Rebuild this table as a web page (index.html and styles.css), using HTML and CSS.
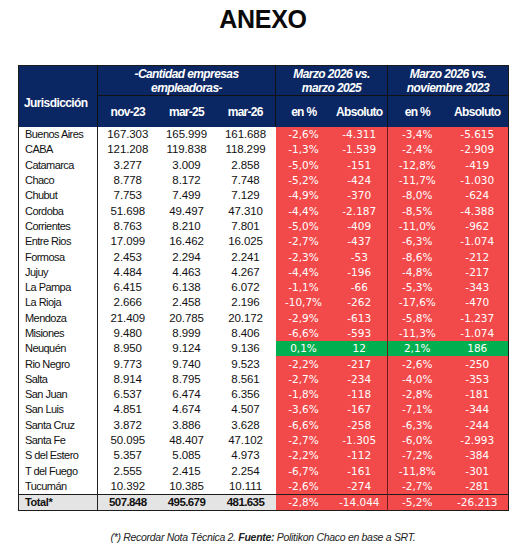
FILE: index.html
```html
<!DOCTYPE html>
<html lang="es">
<head>
<meta charset="utf-8">
<title>Anexo</title>
<link rel="stylesheet" href="styles.css">
</head>
<body>
<h1 class="title">ANEXO</h1>
<table class="grid">
  <colgroup>
    <col class="w-jur"><col class="w-n1"><col class="w-n2"><col class="w-n3">
    <col class="w-p1"><col class="w-a1"><col class="w-p2"><col class="w-a2">
  </colgroup>
  <thead>
    <tr class="h1">
      <th rowspan="2" class="hjur">Jurisdicción</th>
      <th colspan="3" class="grp">-Cantidad empresas<br>empleadoras-</th>
      <th colspan="2" class="grp">Marzo 2026 vs.<br>marzo 2025</th>
      <th colspan="2" class="grp last">Marzo 2026 vs.<br>noviembre 2023</th>
    </tr>
    <tr class="h2">
      <th>nov-23</th><th>mar-25</th><th class="sep">mar-26</th>
      <th>en %</th><th class="sep">Absoluto</th>
      <th>en %</th><th>Absoluto</th>
    </tr>
  </thead>
  <tbody>
    <tr><td class="jur">Buenos Aires</td><td class="n">167.303</td><td class="n">165.999</td><td class="n">161.688</td><td class="r">-2,6%</td><td class="r div">-4.311</td><td class="r">-3,4%</td><td class="r">-5.615</td></tr>
    <tr><td class="jur">CABA</td><td class="n">121.208</td><td class="n">119.838</td><td class="n">118.299</td><td class="r">-1,3%</td><td class="r div">-1.539</td><td class="r">-2,4%</td><td class="r">-2.909</td></tr>
    <tr><td class="jur">Catamarca</td><td class="n">3.277</td><td class="n">3.009</td><td class="n">2.858</td><td class="r">-5,0%</td><td class="r div">-151</td><td class="r">-12,8%</td><td class="r">-419</td></tr>
    <tr><td class="jur">Chaco</td><td class="n">8.778</td><td class="n">8.172</td><td class="n">7.748</td><td class="r">-5,2%</td><td class="r div">-424</td><td class="r">-11,7%</td><td class="r">-1.030</td></tr>
    <tr><td class="jur">Chubut</td><td class="n">7.753</td><td class="n">7.499</td><td class="n">7.129</td><td class="r">-4,9%</td><td class="r div">-370</td><td class="r">-8,0%</td><td class="r">-624</td></tr>
    <tr><td class="jur">Cordoba</td><td class="n">51.698</td><td class="n">49.497</td><td class="n">47.310</td><td class="r">-4,4%</td><td class="r div">-2.187</td><td class="r">-8,5%</td><td class="r">-4.388</td></tr>
    <tr><td class="jur">Corrientes</td><td class="n">8.763</td><td class="n">8.210</td><td class="n">7.801</td><td class="r">-5,0%</td><td class="r div">-409</td><td class="r">-11,0%</td><td class="r">-962</td></tr>
    <tr><td class="jur">Entre Rios</td><td class="n">17.099</td><td class="n">16.462</td><td class="n">16.025</td><td class="r">-2,7%</td><td class="r div">-437</td><td class="r">-6,3%</td><td class="r">-1.074</td></tr>
    <tr><td class="jur">Formosa</td><td class="n">2.453</td><td class="n">2.294</td><td class="n">2.241</td><td class="r">-2,3%</td><td class="r div">-53</td><td class="r">-8,6%</td><td class="r">-212</td></tr>
    <tr><td class="jur">Jujuy</td><td class="n">4.484</td><td class="n">4.463</td><td class="n">4.267</td><td class="r">-4,4%</td><td class="r div">-196</td><td class="r">-4,8%</td><td class="r">-217</td></tr>
    <tr><td class="jur">La Pampa</td><td class="n">6.415</td><td class="n">6.138</td><td class="n">6.072</td><td class="r">-1,1%</td><td class="r div">-66</td><td class="r">-5,3%</td><td class="r">-343</td></tr>
    <tr><td class="jur">La Rioja</td><td class="n">2.666</td><td class="n">2.458</td><td class="n">2.196</td><td class="r">-10,7%</td><td class="r div">-262</td><td class="r">-17,6%</td><td class="r">-470</td></tr>
    <tr><td class="jur">Mendoza</td><td class="n">21.409</td><td class="n">20.785</td><td class="n">20.172</td><td class="r">-2,9%</td><td class="r div">-613</td><td class="r">-5,8%</td><td class="r">-1.237</td></tr>
    <tr><td class="jur">Misiones</td><td class="n">9.480</td><td class="n">8.999</td><td class="n">8.406</td><td class="r">-6,6%</td><td class="r div">-593</td><td class="r">-11,3%</td><td class="r">-1.074</td></tr>
    <tr><td class="jur">Neuquén</td><td class="n">8.950</td><td class="n">9.124</td><td class="n">9.136</td><td class="g">0,1%</td><td class="g div">12</td><td class="g">2,1%</td><td class="g">186</td></tr>
    <tr><td class="jur">Rio Negro</td><td class="n">9.773</td><td class="n">9.740</td><td class="n">9.523</td><td class="r">-2,2%</td><td class="r div">-217</td><td class="r">-2,6%</td><td class="r">-250</td></tr>
    <tr><td class="jur">Salta</td><td class="n">8.914</td><td class="n">8.795</td><td class="n">8.561</td><td class="r">-2,7%</td><td class="r div">-234</td><td class="r">-4,0%</td><td class="r">-353</td></tr>
    <tr><td class="jur">San Juan</td><td class="n">6.537</td><td class="n">6.474</td><td class="n">6.356</td><td class="r">-1,8%</td><td class="r div">-118</td><td class="r">-2,8%</td><td class="r">-181</td></tr>
    <tr><td class="jur">San Luis</td><td class="n">4.851</td><td class="n">4.674</td><td class="n">4.507</td><td class="r">-3,6%</td><td class="r div">-167</td><td class="r">-7,1%</td><td class="r">-344</td></tr>
    <tr><td class="jur">Santa Cruz</td><td class="n">3.872</td><td class="n">3.886</td><td class="n">3.628</td><td class="r">-6,6%</td><td class="r div">-258</td><td class="r">-6,3%</td><td class="r">-244</td></tr>
    <tr><td class="jur">Santa Fe</td><td class="n">50.095</td><td class="n">48.407</td><td class="n">47.102</td><td class="r">-2,7%</td><td class="r div">-1.305</td><td class="r">-6,0%</td><td class="r">-2.993</td></tr>
    <tr><td class="jur">S del Estero</td><td class="n">5.357</td><td class="n">5.085</td><td class="n">4.973</td><td class="r">-2,2%</td><td class="r div">-112</td><td class="r">-7,2%</td><td class="r">-384</td></tr>
    <tr><td class="jur">T del Fuego</td><td class="n">2.555</td><td class="n">2.415</td><td class="n">2.254</td><td class="r">-6,7%</td><td class="r div">-161</td><td class="r">-11,8%</td><td class="r">-301</td></tr>
    <tr><td class="jur">Tucumán</td><td class="n">10.392</td><td class="n">10.385</td><td class="n">10.111</td><td class="r">-2,6%</td><td class="r div">-274</td><td class="r">-2,7%</td><td class="r">-281</td></tr>
  </tbody>
  <tfoot>
    <tr class="total"><td class="jur">Total*</td><td class="n">507.848</td><td class="n">495.679</td><td class="n">481.635</td><td class="r">-2,8%</td><td class="r div">-14.044</td><td class="r">-5,2%</td><td class="r">-26.213</td></tr>
  </tfoot>
</table>
<p class="note">(*) Recordar Nota Técnica 2. <b>Fuente:</b> Politikon Chaco en base a SRT.</p>
</body>
</html>
```

FILE: styles.css
```css
html, body {
  margin: 0;
  padding: 0;
  background: #ffffff;
}
body {
  width: 526px;
  font-family: "Liberation Sans", Arial, sans-serif;
  color: #111;
}
.title {
  margin: 4px 0 0;
  height: 30px;
  line-height: 30px;
  font-size: 25px;
  font-weight: 700;
  text-align: center;
  color: #0a0a0a;
  letter-spacing: -0.3px;
  font-family: "Liberation Sans", Arial, sans-serif;
}
.grid {
  margin: 31px 0 0 18px;
  width: 490px;
  border-collapse: collapse;
  table-layout: fixed;
  border: 1.5px solid #1c1c1c;
}
.w-jur { width: 79px; }
.w-n1 { width: 60px; }
.w-n2 { width: 58px; }
.w-n3 { width: 60px; }
.w-p1 { width: 56px; }
.w-a1 { width: 56px; }
.w-p2 { width: 59px; }
.w-a2 { width: 62px; }

th {
  background: #0b2763;
  color: #fff;
  font-family: "Liberation Sans", Arial, sans-serif;
  font-weight: 700;
  font-size: 12px;
  letter-spacing: -0.6px;
  padding: 0;
  text-align: center;
}
.h1 th { height: 29px; }
.h2 th { height: 31px; letter-spacing: -0.7px; }
.grp {
  font-style: italic;
  line-height: 14px;
  border-bottom: 1px solid #111;
  border-right: 1px solid #111;
}
.grp.last { border-right: none; }
.hjur {
  text-align: left;
  padding: 12px 0 0 5px;
  border-right: 1px solid #111;
}
.h2 th.sep { border-right: 1px solid #111; }

td {
  height: 15.3px;
  padding: 0;
  line-height: 15px;
  white-space: nowrap;
}
td.jur {
  padding-left: 6px;
  font-family: "Liberation Sans", Arial, sans-serif;
  font-size: 11px;
  letter-spacing: -0.55px;
  border-right: 1px solid #222;
}
td.n {
  text-align: center;
  font-family: "Liberation Sans", Arial, sans-serif;
  font-size: 11.5px;
  letter-spacing: -0.1px;
}
td.r, td.g {
  text-align: center;
  color: #fff;
  font-family: "DejaVu Sans", Verdana, sans-serif;
  font-size: 10.5px;
}
td.r { background: #f2494a; }
td.g { background: #00b050; }
td.div { border-right: 1px solid #6e1c1c; }

.total td {
  border-top: 1.5px solid #1c1c1c;
  height: 14px;
}
.total td.jur, .total td.n {
  background: #e4e4e4;
  font-family: "Liberation Sans", Arial, sans-serif;
  font-weight: 700;
  font-size: 11.5px;
  letter-spacing: -0.6px;
}
.total td.jur { font-size: 11px; letter-spacing: -0.4px; }

.note {
  margin: 20px 0 0;
  text-align: center;
  font-family: "Liberation Sans", Arial, sans-serif;
  font-style: italic;
  font-size: 10.5px;
  letter-spacing: -0.3px;
  line-height: 13px;
  color: #222;
}
.note b { font-weight: 700; }
```
